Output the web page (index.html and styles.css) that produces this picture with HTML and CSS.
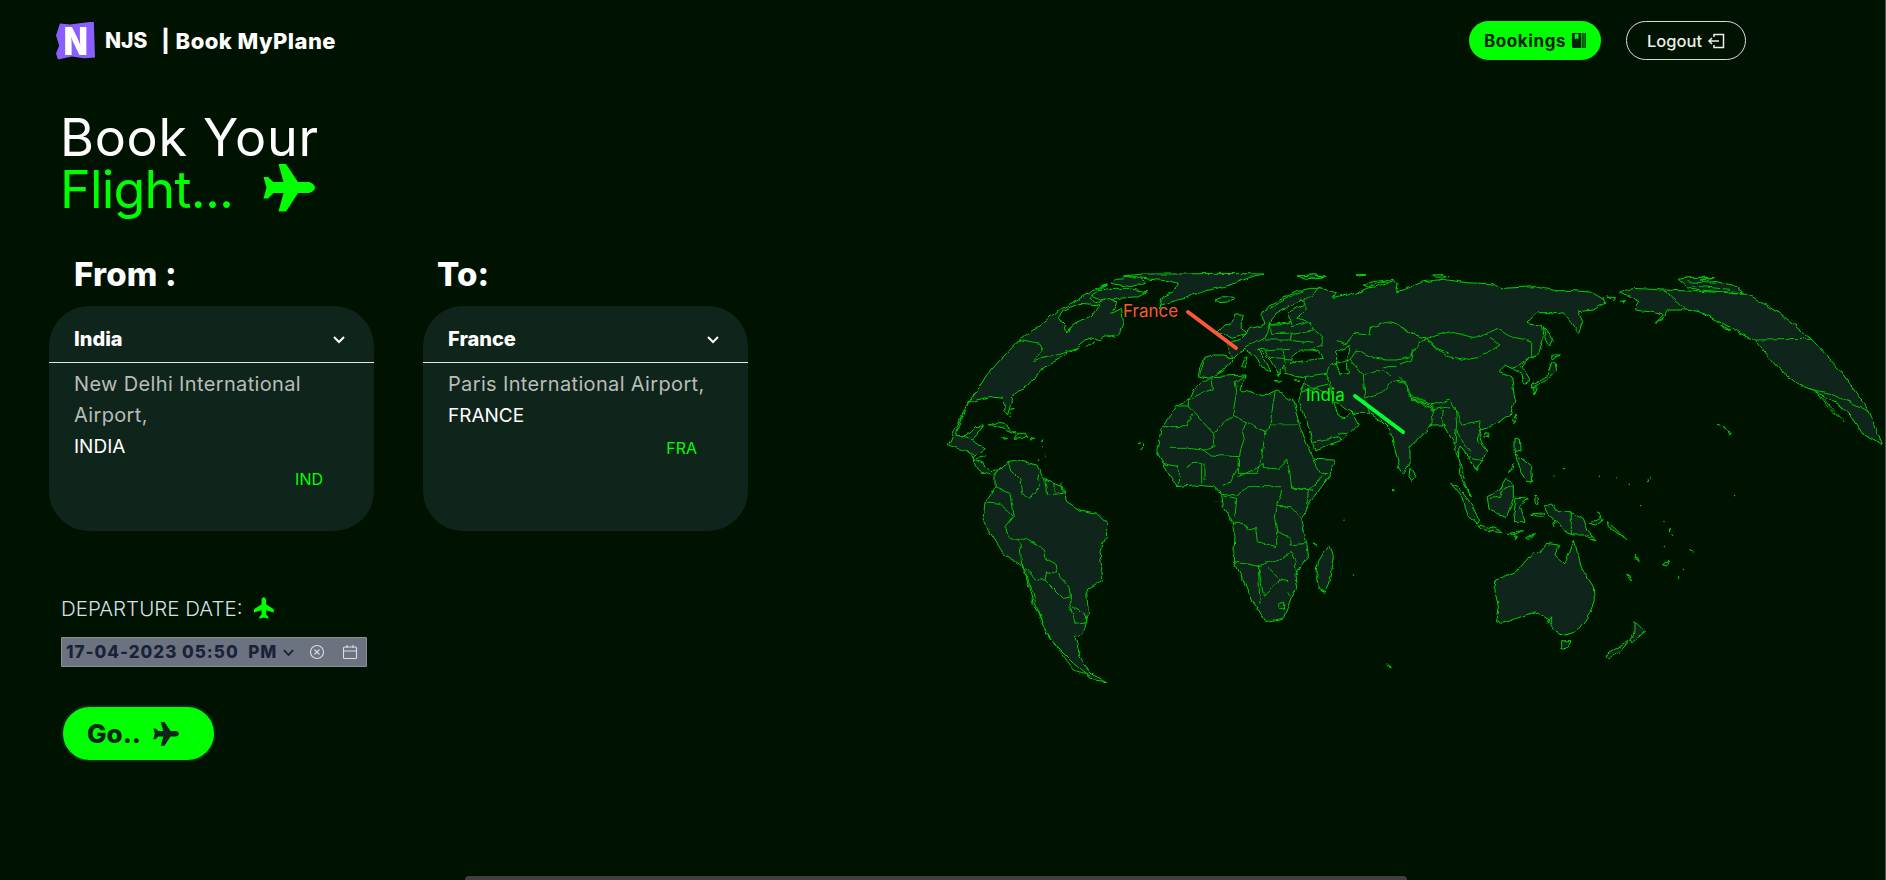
FILE: index.html
```html
<!DOCTYPE html>
<html lang="en">
<head>
<meta charset="utf-8">
<title>NJS | Book MyPlane</title>
<link rel="stylesheet" href="styles.css">
</head>
<body>
<svg class="defs" width="0" height="0" aria-hidden="true">
  <symbol id="plane" viewBox="0 0 52 48">
    <path d="M52 23.5C52 26.5 48 29 45 29H35L23 47.5H15.5L20.500 29H10.500L5 34.500H0.500L3.500 23.500L0.500 13H5L10.500 18H20.500L15.500 0H23L35 18H45C48 18 52 20.500 52 23.500Z"/>
  </symbol>
</svg>
<div class="page">
  <header class="topbar">
    <div class="brand">
      <div class="logo"><span class="logo-n">N</span></div>
      <span class="brand-name">NJS</span>
      <span class="brand-title">| Book MyPlane</span>
    </div>
    <nav class="nav">
      <a class="btn-bookings">Bookings
        <svg class="btn-icon" viewBox="0 0 16 16"><path d="M1 1.500C1 .7 1.700 0 2.500 0H11V16H2.500C1.700 16 1 15.300 1 14.500ZM4 1V7L6 5.500L8 7V1Z" fill-rule="evenodd"/><rect x="12" width="1.500" height="16"/><rect x="14.300" width="1.500" height="16"/></svg>
      </a>
      <a class="btn-logout">Logout
        <svg class="btn-icon logout-icon" viewBox="0 0 18 16"><path class="icon-line" d="M7 4V1.500H16.500V14.500H7V12M12 8H2M5 5L2 8L5 11"/></svg>
      </a>
    </nav>
  </header>
  <main class="main">
    <section class="booking">
      <h1 class="headline">Book Your<br><span class="accent">Flight...</span><svg class="headline-plane"><use href="#plane"/></svg></h1>
      <div class="routes">
        <div class="route">
          <h2 class="route-label">From :</h2>
          <div class="card">
            <div class="card-head"><span>India</span><svg class="chev" viewBox="0 0 14 9"><path d="M2 2L7 7L12 2"/></svg></div>
            <div class="card-body">
              <p class="airport">New Delhi International<br>Airport,</p>
              <p class="country">INDIA</p>
              <p class="code">IND</p>
            </div>
          </div>
        </div>
        <div class="route route-to">
          <h2 class="route-label">To:</h2>
          <div class="card">
            <div class="card-head"><span>France</span><svg class="chev" viewBox="0 0 14 9"><path d="M2 2L7 7L12 2"/></svg></div>
            <div class="card-body">
              <p class="airport">Paris International Airport,</p>
              <p class="country">FRANCE</p>
              <p class="code">FRA</p>
            </div>
          </div>
        </div>
      </div>
      <div class="depart">DEPARTURE DATE:<svg class="depart-plane"><use href="#plane"/></svg></div>
      <div class="date">
        <span class="date-text">17-04-2023 05:50&nbsp; PM</span>
        <svg class="date-chev" viewBox="0 0 14 9"><path d="M2 2L7 7L12 2"/></svg>
        <svg class="date-clear" viewBox="0 0 16 16"><circle cx="8" cy="8" r="6.500"/><path d="M5.500 5.500L10.500 10.500M10.500 5.500L5.500 10.500"/></svg>
        <svg class="date-cal" viewBox="0 0 16 16"><rect x="1.500" y="3" width="13" height="11.500" rx="1"/><path d="M1.500 7H14.500M5 1V4M11 1V4"/></svg>
      </div>
      <button class="go">Go..<svg class="go-plane"><use href="#plane"/></svg></button>
    </section>
    <section class="map-wrap">
      <svg class="map" viewBox="930 260 956 440" width="956" height="440">
        <defs>
          <filter id="rough" x="0" y="0" width="100%" height="100%" filterUnits="objectBoundingBox" color-interpolation-filters="sRGB">
            <feTurbulence type="fractalNoise" baseFrequency=".11" numOctaves="2" seed="4" result="n"/>
            <feDisplacementMap in="SourceGraphic" in2="n" scale="5" xChannelSelector="R" yChannelSelector="G"/>
          </filter>
        </defs>
        <g filter="url(#rough)">
        <rect x="930" y="260" width="956" height="440" fill="none"/>
        <!-- Americas, Greenland, Africa -->
        <g transform="translate(930 260) scale(.33333)">
          <path class="land" d="M580 48L640 42L760 42L860 40L1000 42L960 52L920 68L880 80L830 92L780 108L740 122L715 128L690 135L684 145L700 110L730 95L742 70L715 62L680 60L640 55Z"/>
          <path class="land" d="M855 120L880 110L915 112L900 125L870 128Z"/>
          <path class="land" d="M1105 48L1150 45L1190 48L1150 55Z"/>
          <path class="land" d="M1275 45L1305 44L1290 47Z"/>
          <path class="land" d="M560 55L620 50L650 70L600 80L540 70Z"/>
          <path class="land" d="M490 95L540 85L590 85L650 95L620 110L570 115L520 125L490 110Z"/>
          <path class="land" d="M55 555L75 510L100 455L130 410L170 345L220 290L270 238L330 195L385 152L440 120L490 92L530 75L500 95L480 115L500 128L540 115L560 130L545 160L575 145L580 185L570 215L555 235L530 225L510 240L490 232L465 240L440 260L400 290L355 315L330 335L320 350L295 372L250 405L240 440L233 465L222 450L220 415L180 410L140 420L115 430L85 500L80 525L105 530L125 515L135 500L160 498L140 525L125 540L165 565L135 585L130 600L150 635L190 648L195 640L235 605L200 630L180 632L160 610L140 600L110 575L95 570Z"/>
          <path class="sea" d="M385 170L400 150L450 130L510 135L490 165L450 185L430 195L410 218L405 195L395 185Z"/>
          <path class="line" d="M270 238L330 250L340 270L308 302L400 280L420 272L440 262M470 260L495 245M520 232L555 225M80 525L125 540M110 575L135 585M130 600L165 590"/>
          <path class="land" d="M175 495L205 483L240 505L255 520L220 505L190 495Z"/>
          <path class="land" d="M260 520L290 520L290 532L255 535Z"/>
          <path class="land" d="M215 533L230 535L220 538Z"/>
          <path class="land" d="M298 533L312 535L300 537Z"/>
          <path class="dots" d="M245 448L255 445M240 470L243 462M335 545L338 540M338 560L338 562M345 585L345 587M325 600L325 602M625 548L632 546M640 552L640 560M630 568L635 566M858 725L858 726M1245 777L1245 778M1268 942L1268 943M1388 688L1388 692M1150 852L1160 858M1370 1215L1380 1220"/>
          <path class="land" d="M235 605L260 600L320 615L345 660L400 680L410 725L450 750L500 760L530 790L530 830L510 870L518 960L470 990L475 1060L460 1120L435 1130L450 1190L480 1240L530 1265L490 1260L430 1210L380 1160L340 1100L310 1030L280 920L220 880L175 810L160 770L165 725L195 680L195 640Z"/>
          <path class="line" d="M235 605L240 630L270 660L275 700L300 715L330 680L325 640M345 660L350 705L400 700L395 670M375 670L375 700M165 725L210 730L248 770L225 800L235 830L265 845M195 680L240 700L250 770M265 845L290 835L340 870L345 895L375 910L380 940L350 935L345 960L320 960M270 850L275 915L320 960M380 940L420 985L425 1010L400 1015L345 960M425 1040L470 1065L470 1085L440 1090L420 1040M280 920L310 1000L325 1060L345 1110L385 1170L430 1230L480 1245M425 1010L420 1040"/>
          <path class="land" d="M680 575L695 500L740 440L775 420L790 385L845 350L945 345L930 390L985 405L1000 410L1040 390L1090 425L1110 500L1142 580L1150 598L1215 600L1190 660L1130 740L1115 780L1130 850L1135 885L1095 945L1100 985L1085 1010L1060 1075L1005 1085L960 1010L940 960L910 900L915 830L905 780L880 745L875 700L850 680L790 675L740 680L700 610Z"/>
          <path class="line" d="M845 350L850 385L775 420M745 438L775 438M775 420L775 440L850 520L855 555L820 570L775 565L720 565M695 500L770 500L785 465M945 345L915 365L920 395L908 465L945 485L940 530L925 590L925 640L980 640L990 610L1008 515L1020 495L1035 395M908 465L850 520M945 485L1008 515M840 585L925 590L925 620L900 670L875 680M820 570L840 585M785 610L815 610L815 670M825 610L825 660M700 610L745 620L745 680M770 620L790 610M925 650L990 620L1000 610L1000 625L1040 630L1070 600L1080 640L1085 685L1150 690M1150 600L1175 640L1190 640L1135 690L1130 740M1085 680L1130 690M1115 775L1080 740L1040 740M1055 690L1040 740M875 700L920 705L955 680L1050 680M1040 745L1035 780L1040 815M905 790L940 790L955 810L980 805L985 845L1000 850L1040 860L1040 815L1075 830M1080 830L1080 855L1130 850M1085 875L1095 905L1100 945M910 905L985 918L1050 895L1085 875M985 918L990 1030M985 918L1000 1005L1050 960L1075 965M1018 925L1050 960M880 705L920 715L915 770M1070 1000L1080 1010"/>
          <path class="line thick-line" d="M1020 494L1110 494"/>
          <path class="line" d="M1050 1032L1062 1030L1060 1045L1048 1045Z"/>
          <path class="land" d="M1200 855L1210 890L1195 975L1185 995L1165 985L1160 950L1165 905L1180 880Z"/>
        </g>
        <!-- Eurasia and its borders -->
        <g transform="translate(1190 270) scale(.33333)">
          <path class="land" d="M25 318L30 290L45 262L70 255L100 255L130 267L118 240L112 225L150 210L165 195L180 175L205 170L225 165L215 135L240 105L280 85L320 65L360 55L385 55L420 62L440 68L430 85L470 75L500 70L530 55L560 50L610 32L625 40L620 65L640 60L700 35L760 28L830 38L910 42L940 55L1030 50L1100 62L1150 62L1210 67L1240 85L1245 100L1210 120L1165 125L1178 155L1165 190L1135 145L1120 125L1105 128L1040 128L1010 160L1055 170L1060 210L1045 255L1015 265L995 290L1015 320L1020 335L1000 340L992 310L970 295L940 285L928 305L965 320L975 390L960 435L920 460L890 475L865 480L890 545L858 605L835 560L810 530L808 570L805 610L845 680L825 635L795 525L760 465L730 465L715 475L660 530L660 580L640 610L630 595L615 540L600 480L575 455L540 430L490 430L470 420L445 400L430 395L445 435L470 445L485 425L505 465L480 490L450 515L375 540L355 470L325 395L345 325L285 310L285 285L270 300L272 320L240 270L205 235L240 305L225 300L195 260L165 235L130 265L100 300L55 325Z"/>
          <path class="sea" d="M240 165L255 130L290 110L335 90L345 100L295 130L300 155L270 165Z"/>
          <path class="sea" d="M305 260L330 240L365 240L385 245L400 265L345 272L300 280Z"/>
          <path class="sea" d="M440 245L480 228L482 240L470 260L475 310L450 315L440 285Z"/>
          <path class="line" d="M45 262L30 315M100 255L135 268M165 230L225 205L240 165L300 155L305 170L360 155L370 180L400 205L395 225L360 240M240 165L245 190L305 190L300 210L225 210M305 190L370 180M300 210L370 220M225 240L300 235M200 235L225 240L240 265M240 265L300 270M280 240L285 280M385 55L345 90L345 120L320 145L360 155M240 115L300 80L340 65M340 320L410 310L420 285M410 310L420 335L430 395M340 340L415 370M335 365L415 345M520 315L525 385L540 430M440 215L470 225L490 190L540 195L545 170L600 155L640 170L660 190L710 205L740 235L780 250M480 270L500 240L560 265L590 270L620 270L660 260L690 220L710 205M580 290L620 290M525 385L580 365L610 330L650 335L655 375L665 380L730 405M580 300L600 315M420 285L480 270L520 315L580 300M620 335L650 340M655 380L720 410L725 420L780 410M370 515L445 500L450 515M445 490L475 490"/>
          <path class="land" d="M80 190L105 165L125 160L135 135L160 135L150 175L170 190L130 205L100 190Z"/>
          <path class="land" d="M165 265L175 260L165 295L155 290Z"/>
          <path class="land" d="M252 331L275 333L262 337Z"/>
          <path class="land" d="M315 332L330 333L322 337Z"/>
          <path class="land" d="M520 45L550 35L610 28L580 35L535 52Z"/>
          <path class="land" d="M325 18L370 15L405 20L350 26Z"/>
          <path class="land" d="M495 15L525 15L510 18Z"/>
          <path class="land" d="M725 15L760 14L780 20L740 22Z"/>
        </g>
        <!-- East Asia, Alaska, Oceania -->
        <g transform="translate(1400 260) scale(.33333)">
          <path class="line" d="M0 195L30 220L80 235L150 215L230 235L290 205L340 235L395 245L395 285L385 295M80 235L105 265L145 290L200 300L245 290L300 255L270 235M80 235L40 270L35 300L0 312M0 350L20 370L35 420L95 435L150 420L170 460L190 495M35 415L95 450M95 435L100 495M130 450L125 495M165 440L170 490L165 550M170 510L210 580M190 495L240 485L235 540L260 575M205 590L250 600M340 325L385 295"/>
          <path class="land" d="M395 385L440 360L470 335L465 305L455 310L440 350L395 375Z"/>
          <path class="land" d="M398 382L412 385L405 402Z"/>
          <path class="land" d="M455 285L480 285L460 300Z"/>
          <path class="land" d="M430 200L460 240L450 260L435 230Z"/>
          <path class="land" d="M345 462L350 480L342 495L338 478Z"/>
          <path class="land" d="M255 518L268 520L265 532L253 530Z"/>
          <path class="land" d="M30 625L45 650L35 662L27 650Z"/>
          <path class="land" d="M345 535L358 535L360 570L345 575Z"/>
          <path class="land" d="M345 580L395 620L398 665L380 665L365 640Z"/>
          <path class="land" d="M342 608L325 638L340 625Z"/>
          <path class="land" d="M152 670L175 680L215 735L235 780L232 792L205 770L185 710Z"/>
          <path class="land" d="M235 795L285 805L310 818L280 815L240 805Z"/>
          <path class="land" d="M262 710L300 690L320 655L340 675L340 715L320 770L290 760L268 750Z"/>
          <path class="line" d="M268 715L300 712L310 685L340 680"/>
          <path class="land" d="M345 715L385 715L360 735L375 785L345 785L340 750Z"/>
          <path class="land" d="M405 705L415 715L412 735L405 725Z"/>
          <path class="land" d="M395 762L432 758L430 768L410 768Z"/>
          <path class="land" d="M322 820L370 815L345 825Z"/>
          <path class="land" d="M375 835L405 817L385 838Z"/>
          <path class="land" d="M340 828L352 830L345 836Z"/>
          <path class="land" d="M432 738L455 732L470 755L515 755L550 775L565 815L585 840L550 825L520 825L490 815L480 790L450 770Z"/>
          <path class="line" d="M514 755L514 825"/>
          <path class="land" d="M458 790L465 785L462 800Z"/>
          <path class="land" d="M570 790L605 770L592 755L610 780L590 795Z"/>
          <path class="land" d="M622 785L650 810L680 842L660 825L625 800Z"/>
          <path class="land" d="M706 883L715 905L705 895Z"/>
          <path class="land" d="M680 942L698 962L688 960Z"/>
          <path class="land" d="M786 915L810 898L800 918Z"/>
          <path class="land" d="M985 515L997 520L992 525Z"/>
          <path class="dots" d="M953 493L958 495M968 500L980 507M870 872L880 876M462 647L462 648M490 625L490 626M598 648L598 649M650 653L650 654M688 670L688 671M740 665L745 660M752 651L752 652M722 733L722 734M1004 706L1004 708M792 787L792 788M810 805L812 815M818 825L818 826M793 859L793 860M850 925L850 926M836 950L836 952"/>
          <path class="land" d="M287 960L350 935L400 875L420 880L440 850L475 855L465 885L495 912L522 840L545 925L580 980L583 1020L570 1060L530 1115L495 1125L460 1110L440 1075L405 1055L350 1075L305 1090L287 1080L295 1040L285 1000Z"/>
          <path class="line" d="M440 1090L455 1070L455 1095"/>
          <path class="land" d="M485 1145L510 1145L495 1168L485 1165Z"/>
          <path class="land" d="M705 1085L735 1115L700 1145L690 1140L705 1115Z"/>
          <path class="land" d="M690 1140L660 1175L625 1195L618 1185L660 1160Z"/>
          <path class="land" d="M660 95L700 85L790 90L1040 100L1130 155L1235 238L1320 330L1408 455L1448 555L1385 520L1360 480L1325 440L1240 390L1190 370L1130 320L1070 245L1020 220L960 185L900 155L860 150L810 150L800 150L795 170L765 190L790 165L745 155L705 150L720 125L690 110Z"/>
          <path class="line" d="M790 90L860 150M1070 240L1235 238M1230 388L1290 400L1350 425L1408 455M1250 395L1290 450L1335 485L1300 450L1265 410"/>
          <path class="land" d="M620 108L650 110L640 120Z"/>
          <path class="land" d="M660 127L680 125L672 132Z"/>
          <path class="land" d="M962 195L990 210L975 208Z"/>
          <path class="land" d="M835 58L870 52L940 52L900 60L950 65L1000 75L1030 98L960 95L900 90L860 80Z"/>
          <path class="line" d="M860 65L950 70M880 78L990 88"/>
        </g>
        </g>
        <text class="map-label label-fr" x="1123" y="317">France</text>
        <line class="pin pin-fr" x1="1188" y1="312" x2="1236" y2="348"/>
        <text class="map-label label-in" x="1306" y="401">India</text>
        <line class="pin pin-in" x1="1355" y1="396" x2="1403" y2="432"/>
      </svg>
    </section>
  </main>
  <div class="dock"></div>
</div>
</body>
</html>
```

FILE: styles.css
```css
* { box-sizing: border-box; }
html, body { margin: 0; padding: 0; }
body {
  background: #001200;
  color: #fff;
  font-family: Inter, "Noto Sans", sans-serif;
  overflow: hidden;
}
.defs { position: absolute; }
.page {
  height: 880px;
  display: flex;
  flex-direction: column;
  border-right: 1px solid #555;
  overflow: hidden;
}
.topbar {
  height: 81px;
  flex: none;
  display: flex;
  justify-content: space-between;
  align-items: center;
  padding: 0 139px 0 56px;
}
.brand { display: flex; align-items: center; font-weight: 800; font-size: 21px; }
.logo {
  width: 39px;
  height: 38px;
  margin-right: 10px;
  display: flex;
  align-items: center;
  justify-content: center;
  background: #8b5fff;
  clip-path: polygon(10% 5%, 36% 8%, 97% 0, 100% 95%, 72% 97%, 41% 92%, 5% 100%, 0 84%, 8% 63%, 0 37%, 5% 21%);
}
.logo-n {
  color: #fff;
  font-weight: 900;
  font-size: 38px;
  line-height: 38px;
  transform: scaleX(.82);
}
.brand-name { margin-right: 14px; }
.brand-title { font-size: 22px; letter-spacing: .45px; }
.nav { display: flex; gap: 25px; }
.btn-bookings, .btn-logout {
  height: 39px;
  border-radius: 20px;
  display: flex;
  align-items: center;
  justify-content: center;
  gap: 5px;
}
.btn-bookings { width: 132px; background: #00ff00; color: #02200a; font-size: 17px; letter-spacing: .6px; font-weight: 700; }
.btn-logout { width: 120px; border: 1px solid #ddd; color: #eee; font-size: 16.500px; font-weight: 500; }
.btn-icon { width: 15px; height: 15px; fill: currentColor; }
.logout-icon { width: 18px; height: 16px; }
.icon-line { fill: none; stroke: currentColor; stroke-width: 1.5; }
.main { flex: 1; display: flex; min-height: 0; }
.booking { width: 930px; flex: none; padding: 31px 0 0 49px; }
.headline {
  margin: 0 0 0 11px;
  font-size: 52px;
  line-height: 52px;
  font-weight: 400;
  letter-spacing: .7px;
}
.accent { color: #00ff00; letter-spacing: -.8px; }
.headline-plane { width: 52px; height: 48px; margin-left: 30px; fill: #00ff00; vertical-align: -4px; }
.routes { display: flex; gap: 49px; margin-top: 38px; }
.route { width: 325px; }
.route-label {
  margin: 0 0 12px 25px;
  font-size: 33px;
  line-height: 40px;
  font-weight: 800;
  letter-spacing: .2px;
}
.route-to .route-label { margin-left: 14px; }
.card { height: 225px; border-radius: 40px; background: #0f241a; overflow: hidden; }
.card-head {
  height: 57px;
  padding: 10px 28px 0 25px;
  display: flex;
  align-items: center;
  justify-content: space-between;
  border-bottom: 1.5px solid #e8e8e8;
  font-size: 20px;
  font-weight: 800;
}
.chev { width: 14px; height: 9px; fill: none; stroke: #fff; stroke-width: 2; }
.card-body { padding: 6px 25px 0; font-size: 19px; line-height: 31px; }
.card-body p { margin: 0; }
.airport { color: #b9bdb9; font-size: 20px; letter-spacing: .35px; }
.country { color: #fff; }
.code { color: #00ff00; font-size: 16px; text-align: right; padding-right: 26px; margin-top: 2px !important; }
.depart { margin: 64px 0 0 12px; display: flex; align-items: center; height: 26px; font-size: 20.500px; font-weight: 300; color: #d5e0ea; }
.depart-plane { width: 22px; height: 20px; margin-left: 11px; fill: #00ff00; transform: rotate(-90deg); }
.date {
  margin: 16px 0 0 12px;
  width: 306px;
  height: 30px;
  padding: 0 0 0 4px;
  display: flex;
  align-items: center;
  background: #6b7280;
  border: 1px solid #8a8f98;
  border-radius: 1px;
  color: #1a2238;
  font-size: 17px;
  font-weight: 800;
  letter-spacing: 1px;
  white-space: nowrap;
}
.date-text { width: 216px; }
.date-chev { width: 13px; height: 9px; fill: none; stroke: #1a2238; stroke-width: 2; }
.date-clear, .date-cal { width: 16px; height: 16px; fill: none; stroke: #ddd; stroke-width: 1.1; }
.date-clear { margin-left: 14px; }
.date-cal { margin-left: 17px; }
.go {
  margin: 38px 0 0 12px;
  width: 155px;
  height: 57px;
  display: flex;
  align-items: center;
  justify-content: flex-start;
  gap: 12px;
  padding-left: 24px;
  border: 2px solid #0f241a;
  border-radius: 29px;
  background: #00ff00;
  color: #0f241a;
  font-family: inherit;
  font-size: 26px;
  font-weight: 800;
}
.go-plane { width: 26px; height: 24px; fill: #0f241a; }
.map-wrap { flex: 1; padding-top: 179px; }
.map { display: block; }
.land { fill: #0f241a; stroke: #00d400; stroke-width: 1px; vector-effect: non-scaling-stroke; stroke-linejoin: round; }
.sea { fill: #001200; stroke: #00d400; stroke-width: 1px; vector-effect: non-scaling-stroke; stroke-linejoin: round; }
.line { fill: none; stroke: #00c000; stroke-width: 1px; vector-effect: non-scaling-stroke; stroke-linejoin: round; }
.thick-line { stroke: #0a6a10; stroke-width: 1.5px; }
.dots { fill: none; stroke: #00d400; stroke-width: 1.2px; vector-effect: non-scaling-stroke; stroke-linecap: round; }
.map-label { font-size: 17px; }
.label-fr { fill: #ff5533; }
.label-in { fill: #00ff00; }
.pin { stroke-width: 4; stroke-linecap: round; }
.pin-fr { stroke: #ff5733; }
.pin-in { stroke: #00ff33; }
.dock {
  flex: none;
  width: 942px;
  height: 4px;
  margin-left: 465px;
  background: #3f3f3f;
  border-radius: 8px 8px 0 0;
}
```
